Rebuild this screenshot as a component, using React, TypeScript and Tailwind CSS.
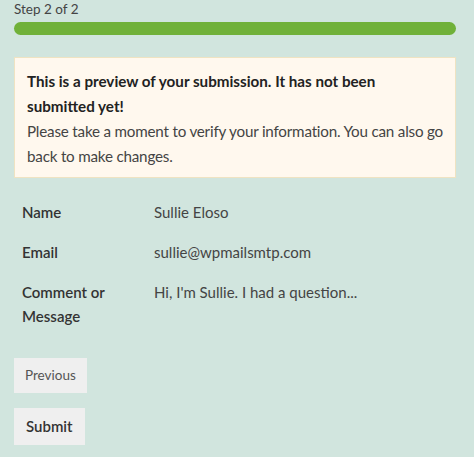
import React from "react";

export default function App() {
  const rows: [string, string][] = [
    ["Name", "Sullie Eloso"],
    ["Email", "sullie@wpmailsmtp.com"],
    ["Comment or Message", "Hi, I'm Sullie. I had a question..."],
  ];
  return (
    <div
      className="w-full h-[457px] bg-[#d1e5de] px-[14px] text-[#333] overflow-hidden"
      style={{ fontFamily: 'Lato, "Noto Sans", sans-serif' }}
    >
      <div className="text-[13.5px] leading-[18px] text-[#444]">Step 2 of 2</div>
      <div className="mt-[4px] h-[13px] w-[442px] rounded-full bg-[#70b139]" />
      <div className="mt-[22px] w-[442px] border border-[#efe3c2] bg-[#fff8ee] pl-[12px] pr-[6px] pt-[11px] pb-[8px] text-[15.2px] leading-[25px] text-[#333]">
        <div className="font-bold text-[#222] pr-[20px]">
          This is a preview of your submission. It has not been submitted yet!
        </div>
        <div className="text-[#444] tracking-[-0.2px]">
          Please take a moment to verify your information. You can also go back to make changes.
        </div>
      </div>
      <div className="mt-[22px] flex flex-col gap-[16px] pl-[8px] text-[15px] leading-[24px]">
        {rows.map(([k, v]) => (
          <div key={k} className="flex">
            <div className="w-[132px] pr-[20px] font-semibold text-[#333]">{k}</div>
            <div className="text-[#444]">{v}</div>
          </div>
        ))}
      </div>
      <div className="mt-[30px] flex flex-col items-start gap-[15px]">
        <button className="h-[35px] px-[11px] bg-[#efefef] text-[13.5px] text-[#555]">Previous</button>
        <button className="h-[37px] px-[12px] bg-[#efefef] text-[15px] font-semibold text-[#333]">Submit</button>
      </div>
    </div>
  );
}
